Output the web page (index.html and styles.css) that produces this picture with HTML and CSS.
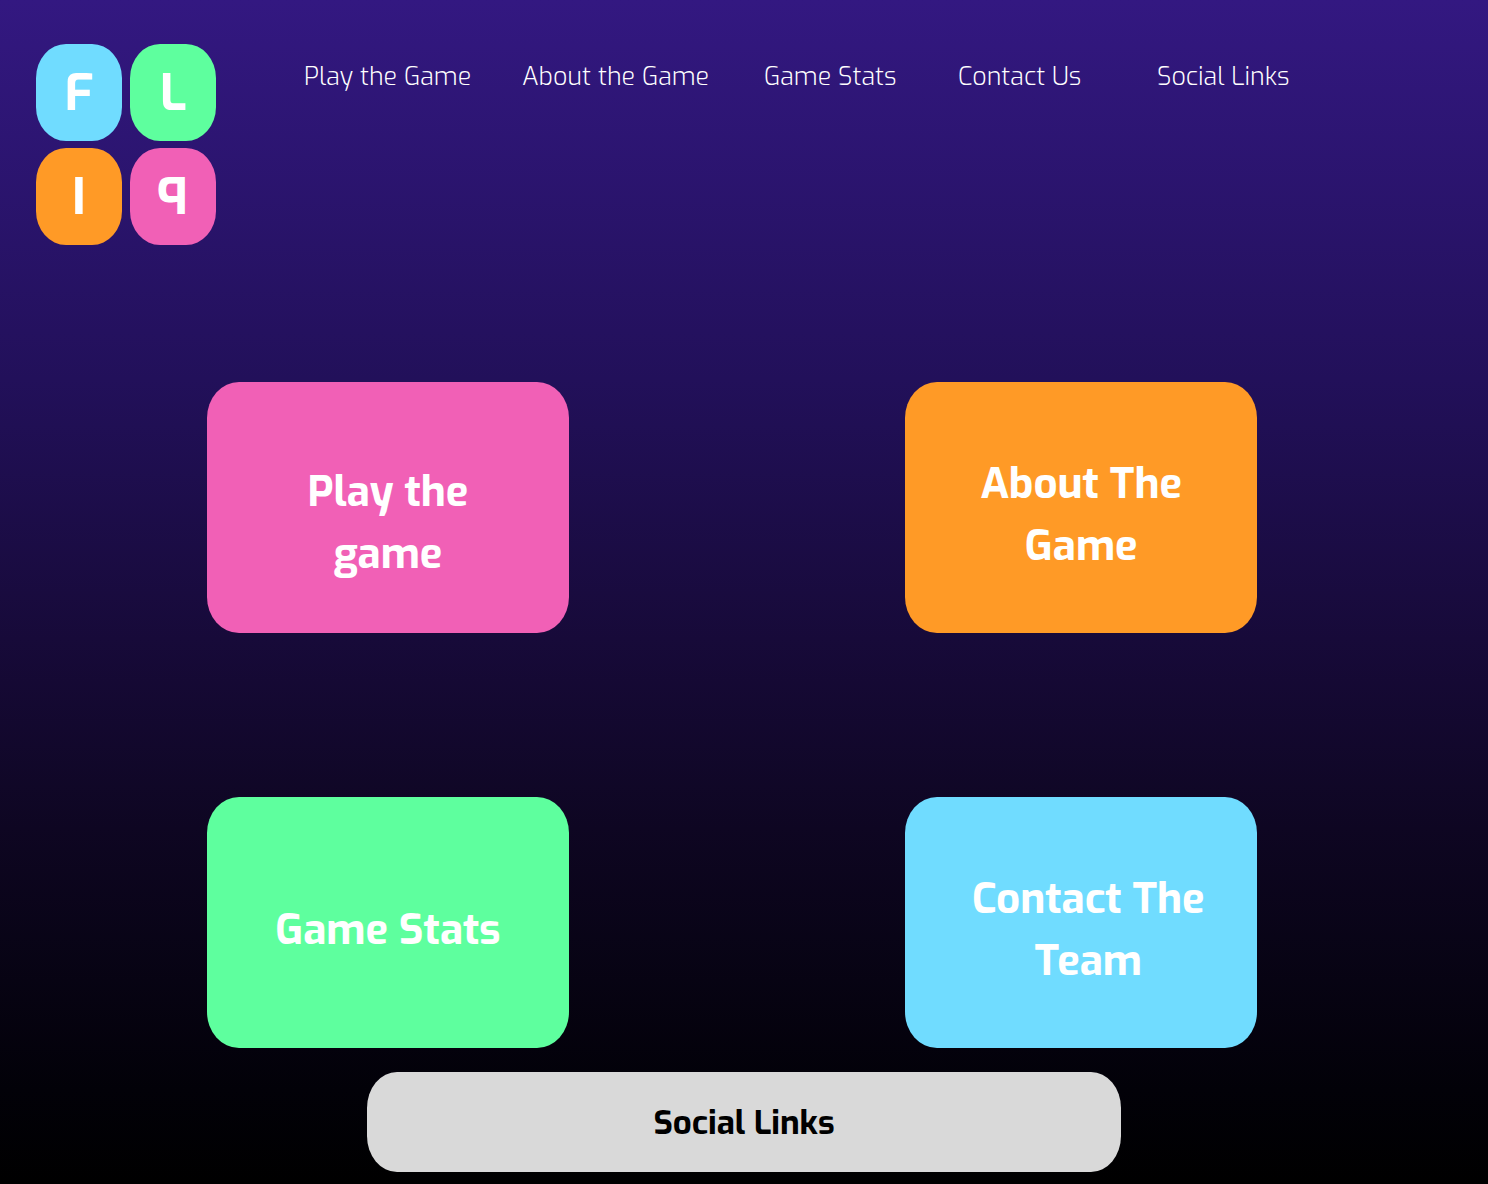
FILE: index.html
```html
<!DOCTYPE html>
<html lang="en">
<head>
  <meta charset="utf-8">
  <meta name="viewport" content="width=device-width, initial-scale=1">
  <title>FLIP</title>
  <link rel="stylesheet" href="styles.css">
</head>
<body>
  <header class="header">
    <a class="logo" href="#" aria-label="FLIP home">
      <span class="tile blue">F</span>
      <span class="tile green">L</span>
      <span class="tile orange">I</span>
      <span class="tile pink"><span class="mirrored">P</span></span>
    </a>
    <nav class="nav">
      <a href="#play">Play the Game</a>
      <a href="#about">About the Game</a>
      <a href="#stats">Game Stats</a>
      <a href="#contact">Contact Us</a>
      <a href="#social">Social Links</a>
    </nav>
  </header>
  <main class="cards">
    <a class="card card-low pink" href="#play">Play the<br>game</a>
    <a class="card orange" href="#about">About The<br>Game</a>
    <a class="card green" href="#stats">Game Stats</a>
    <a class="card card-inset blue" href="#contact">Contact The<br>Team</a>
  </main>
  <footer class="footer">
    <a class="social" href="#social">Social Links</a>
  </footer>
</body>
</html>
```
FILE: styles.css
```css
* {
  box-sizing: border-box;
}

body {
  margin: 0;
  min-height: 100vh;
  background: linear-gradient(#331881, #22105a 32%, #170a39 54%, #0e0622 70%, #020108 92%, #000000);
  color: #ffffff;
  font-family: Exo, "Exo 2", Roboto, sans-serif;
}

a {
  color: inherit;
  text-decoration: none;
}

.pink { background: #f160b6; }
.orange { background: #ff9a26; }
.green { background: #5eff9e; }
.blue { background: #70dcff; }

.header {
  display: flex;
  align-items: flex-start;
  gap: 88px;
  padding: 44px 0 0 36px;
}

.logo {
  flex: none;
  display: grid;
  grid-template-columns: 86px 86px;
  grid-auto-rows: 97px;
  gap: 7px 8px;
  font-size: 50px;
  font-weight: 700;
}

.tile {
  display: flex;
  align-items: center;
  justify-content: center;
  border-radius: 30px / 34px;
}

.mirrored {
  transform: scaleX(-1);
}

.nav {
  flex: 1;
  display: grid;
  grid-template-columns: 218fr 242fr 194fr 199fr 331fr;
  padding-top: 16px;
  font-size: 25px;
  font-weight: 300;
  line-height: 34px;
  white-space: nowrap;
}

.cards {
  display: grid;
  grid-template-columns: 362fr 352fr;
  column-gap: 32%;
  row-gap: 164px;
  width: 70.6%;
  margin: 137px 0 0 13.9%;
}

.card {
  display: flex;
  align-items: center;
  justify-content: center;
  min-height: 251px;
  padding-top: 14px;
  border-radius: 32px / 36px;
  font-size: 42px;
  font-weight: 700;
  line-height: 62px;
  text-align: center;
}

.card-low {
  padding-top: 30px;
}

.card-inset {
  padding-left: 14px;
}

.footer {
  display: flex;
  justify-content: center;
  padding: 24px 0 12px;
}

.social {
  display: flex;
  align-items: center;
  justify-content: center;
  width: 50.7%;
  min-height: 100px;
  padding-top: 2px;
  border-radius: 30px / 36px;
  background: #d9d9d9;
  color: #000000;
  font-size: 33px;
  font-weight: 700;
  line-height: 44px;
}
```
